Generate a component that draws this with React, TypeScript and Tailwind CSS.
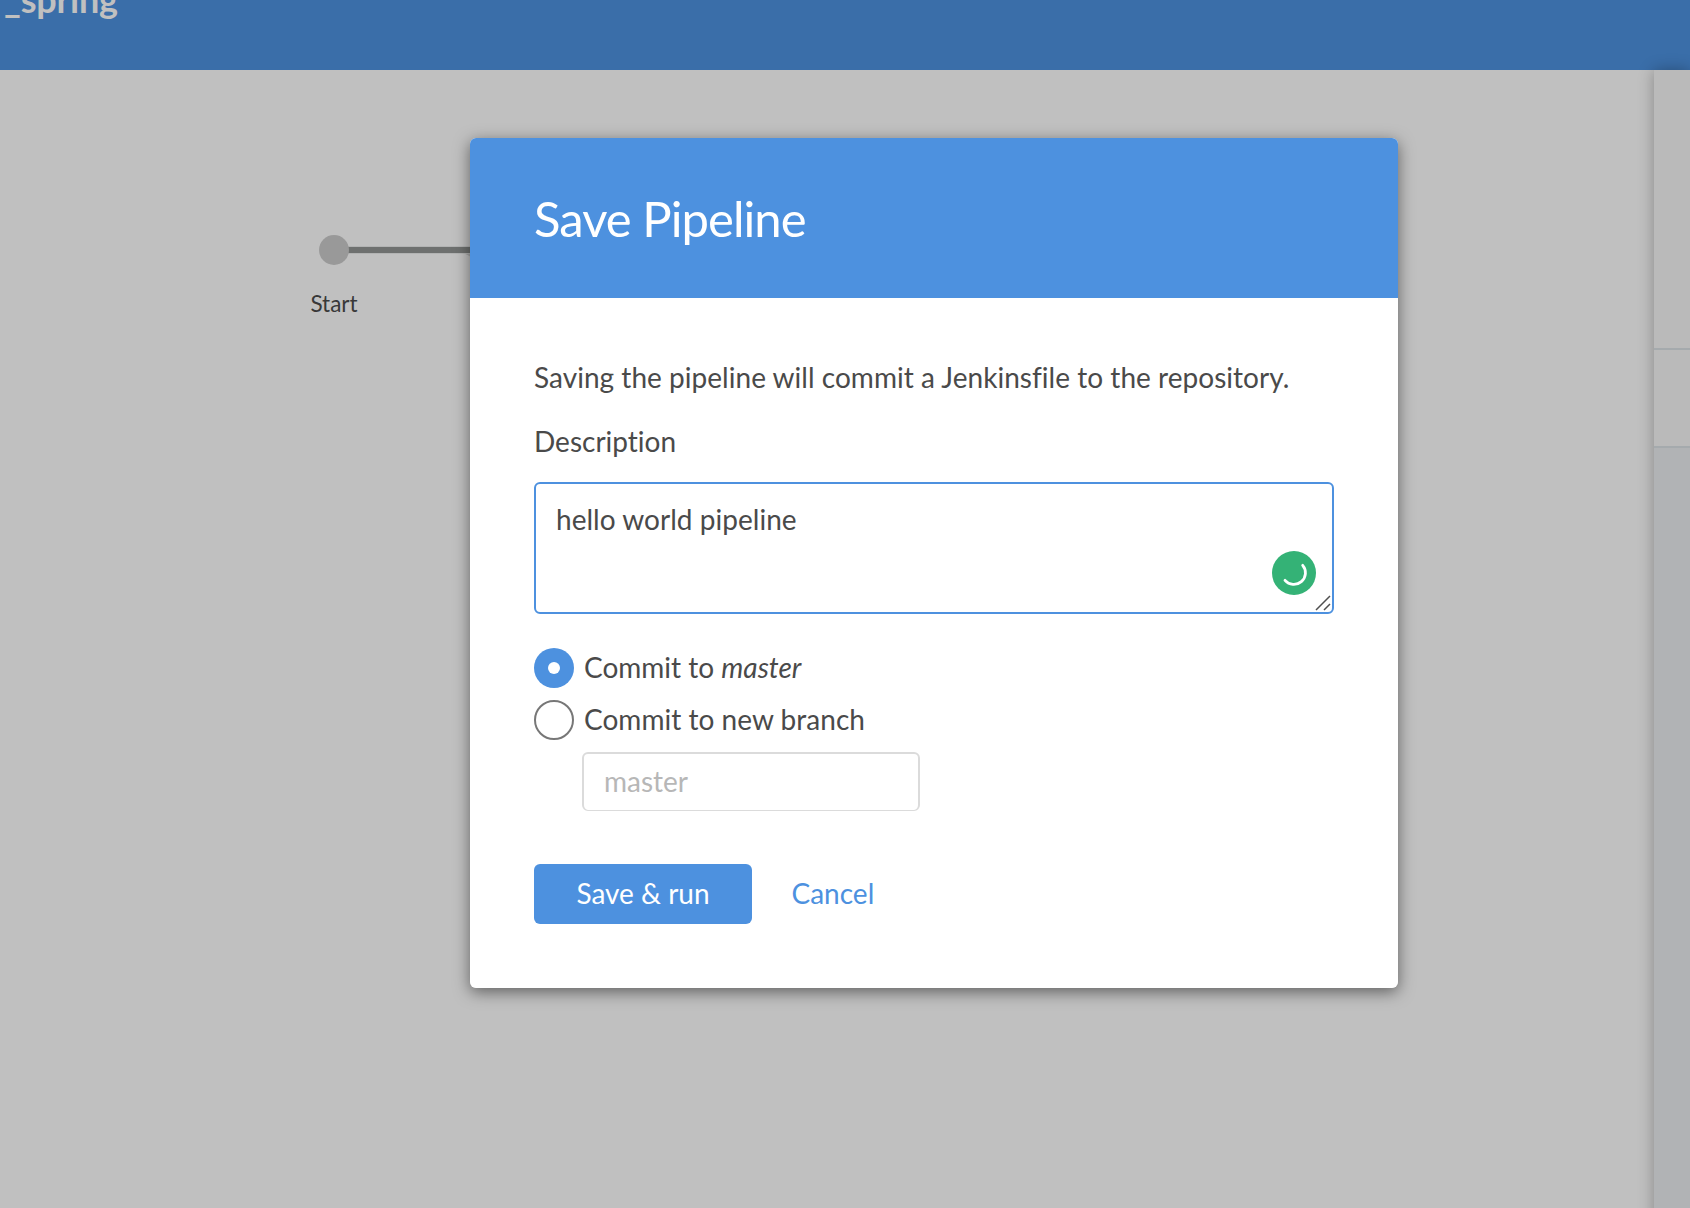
import React from "react";

function Spinner() {
  return (
    <svg className="absolute right-4 bottom-[17px] h-11 w-11" viewBox="0 0 44 44" fill="none">
      <circle cx="22" cy="22" r="22" fill="#34b276" />
      <path d="M30.7 14.3A11.6 11.6 0 1 1 13 29.3" stroke="#fff" strokeWidth="2.8" strokeLinecap="round" />
    </svg>
  );
}

function ResizeGrip() {
  return (
    <svg className="absolute right-px bottom-px h-4 w-4" viewBox="0 0 16 16" fill="none">
      <path d="M1 15L15 1M9 15l6-6" stroke="#4f4f4f" strokeWidth="1.5" />
    </svg>
  );
}

function PipelineGraph() {
  return (
    <svg className="mt-[165px] ml-[319px] block h-[30px] w-[260px]" viewBox="0 0 260 30" fill="none">
      <path d="M134 15C150 15 156 22 162 30" stroke="#a6a6a6" strokeWidth="4" />
      <path d="M20 15H260" stroke="#b2b3b3" strokeWidth="8" />
      <path d="M20 15H260" stroke="#6e706f" strokeWidth="6" />
      <circle cx="15" cy="15" r="15" fill="#999" />
    </svg>
  );
}

function SaveDialog() {
  return (
    <section className="flex h-[850px] w-[928px] flex-col overflow-hidden rounded-md bg-white">
      <header className="flex h-[160px] shrink-0 items-center bg-[#4d91df] px-16">
        <h1 className="mb-px text-[49px] leading-[58px] tracking-[-0.95px] text-white">Save Pipeline</h1>
      </header>
      <div className="flex flex-col items-start px-16 pt-[59px]">
        <p className="text-[28px] leading-10 tracking-[0.03px]">
          Saving the pipeline will commit a Jenkinsfile to the repository.
        </p>
        <p className="mt-6 text-[28px] leading-10">Description</p>
        <div className="relative mt-[21px] h-[132px] w-full rounded-md border-2 border-[#4d91df] px-5 pt-[15px] text-[28px] leading-10 tracking-[0.03px]">
          hello world pipeline
          <Spinner />
          <ResizeGrip />
        </div>
        <div className="mt-[34px] flex h-10 items-center text-[28px]">
          <span className="mr-2.5 flex h-10 w-10 items-center justify-center rounded-full bg-[#4d91df]">
            <span className="h-3 w-3 rounded-full bg-white" />
          </span>
          <span className="pb-0.5">Commit to <em>master</em></span>
        </div>
        <div className="mt-3 flex h-10 items-center text-[28px]">
          <span className="mr-2.5 h-10 w-10 rounded-full border-2 border-[#777]" />
          <span className="pb-0.5 tracking-[0.03px]">Commit to new branch</span>
        </div>
        <div className="mt-3 ml-12 flex h-[59px] w-[338px] items-center rounded-md border-2 border-b border-[#dbdbdb] px-5 pb-[3px] text-[28px] text-[#b7b7b7]">
          master
        </div>
        <div className="mt-[53px] flex h-[60px] items-center text-[28px]">
          <button className="h-[60px] w-[218px] rounded-md bg-[#4d91df] pb-0.5 text-white">Save &amp; run</button>
          <button className="ml-[39.5px] pb-0.5 text-[#4d91df]">Cancel</button>
        </div>
      </div>
    </section>
  );
}

export default function App() {
  return (
    <div className="relative flex h-[1208px] w-[1690px] flex-col overflow-hidden bg-[#c0c0c0] font-[Lato,sans-serif] text-[#4a4a4a] [font-variant-ligatures:none]">
      <header className="h-[70px] shrink-0 overflow-hidden bg-[#3a6ea9]">
        <div className="-mt-[23px] pl-1 text-[36px] leading-[44px] font-bold tracking-[-0.15px] text-[#c0c0c0]">_spring</div>
      </header>
      <main className="flex flex-1">
        <div className="flex-1">
          <PipelineGraph />
          <div className="mt-[25px] ml-[284px] w-[100px] text-center text-[22.5px] leading-7 text-[#383838]">Start</div>
        </div>
        <aside className="-mb-8 w-9 bg-[#b1b3b5] shadow-[0_0_16px_rgba(0,0,0,0.3)]">
          <div className="h-[280px] border-b-2 border-[#a5aaad] bg-[#bababa]" />
          <div className="h-[98px] border-b-2 border-[#a5aaad] bg-[#bababa]" />
        </aside>
      </main>
      <div className="absolute top-[138px] left-[470px] rounded-md shadow-[0_4px_16px_rgba(0,0,0,0.5)]">
        <SaveDialog />
      </div>
    </div>
  );
}
